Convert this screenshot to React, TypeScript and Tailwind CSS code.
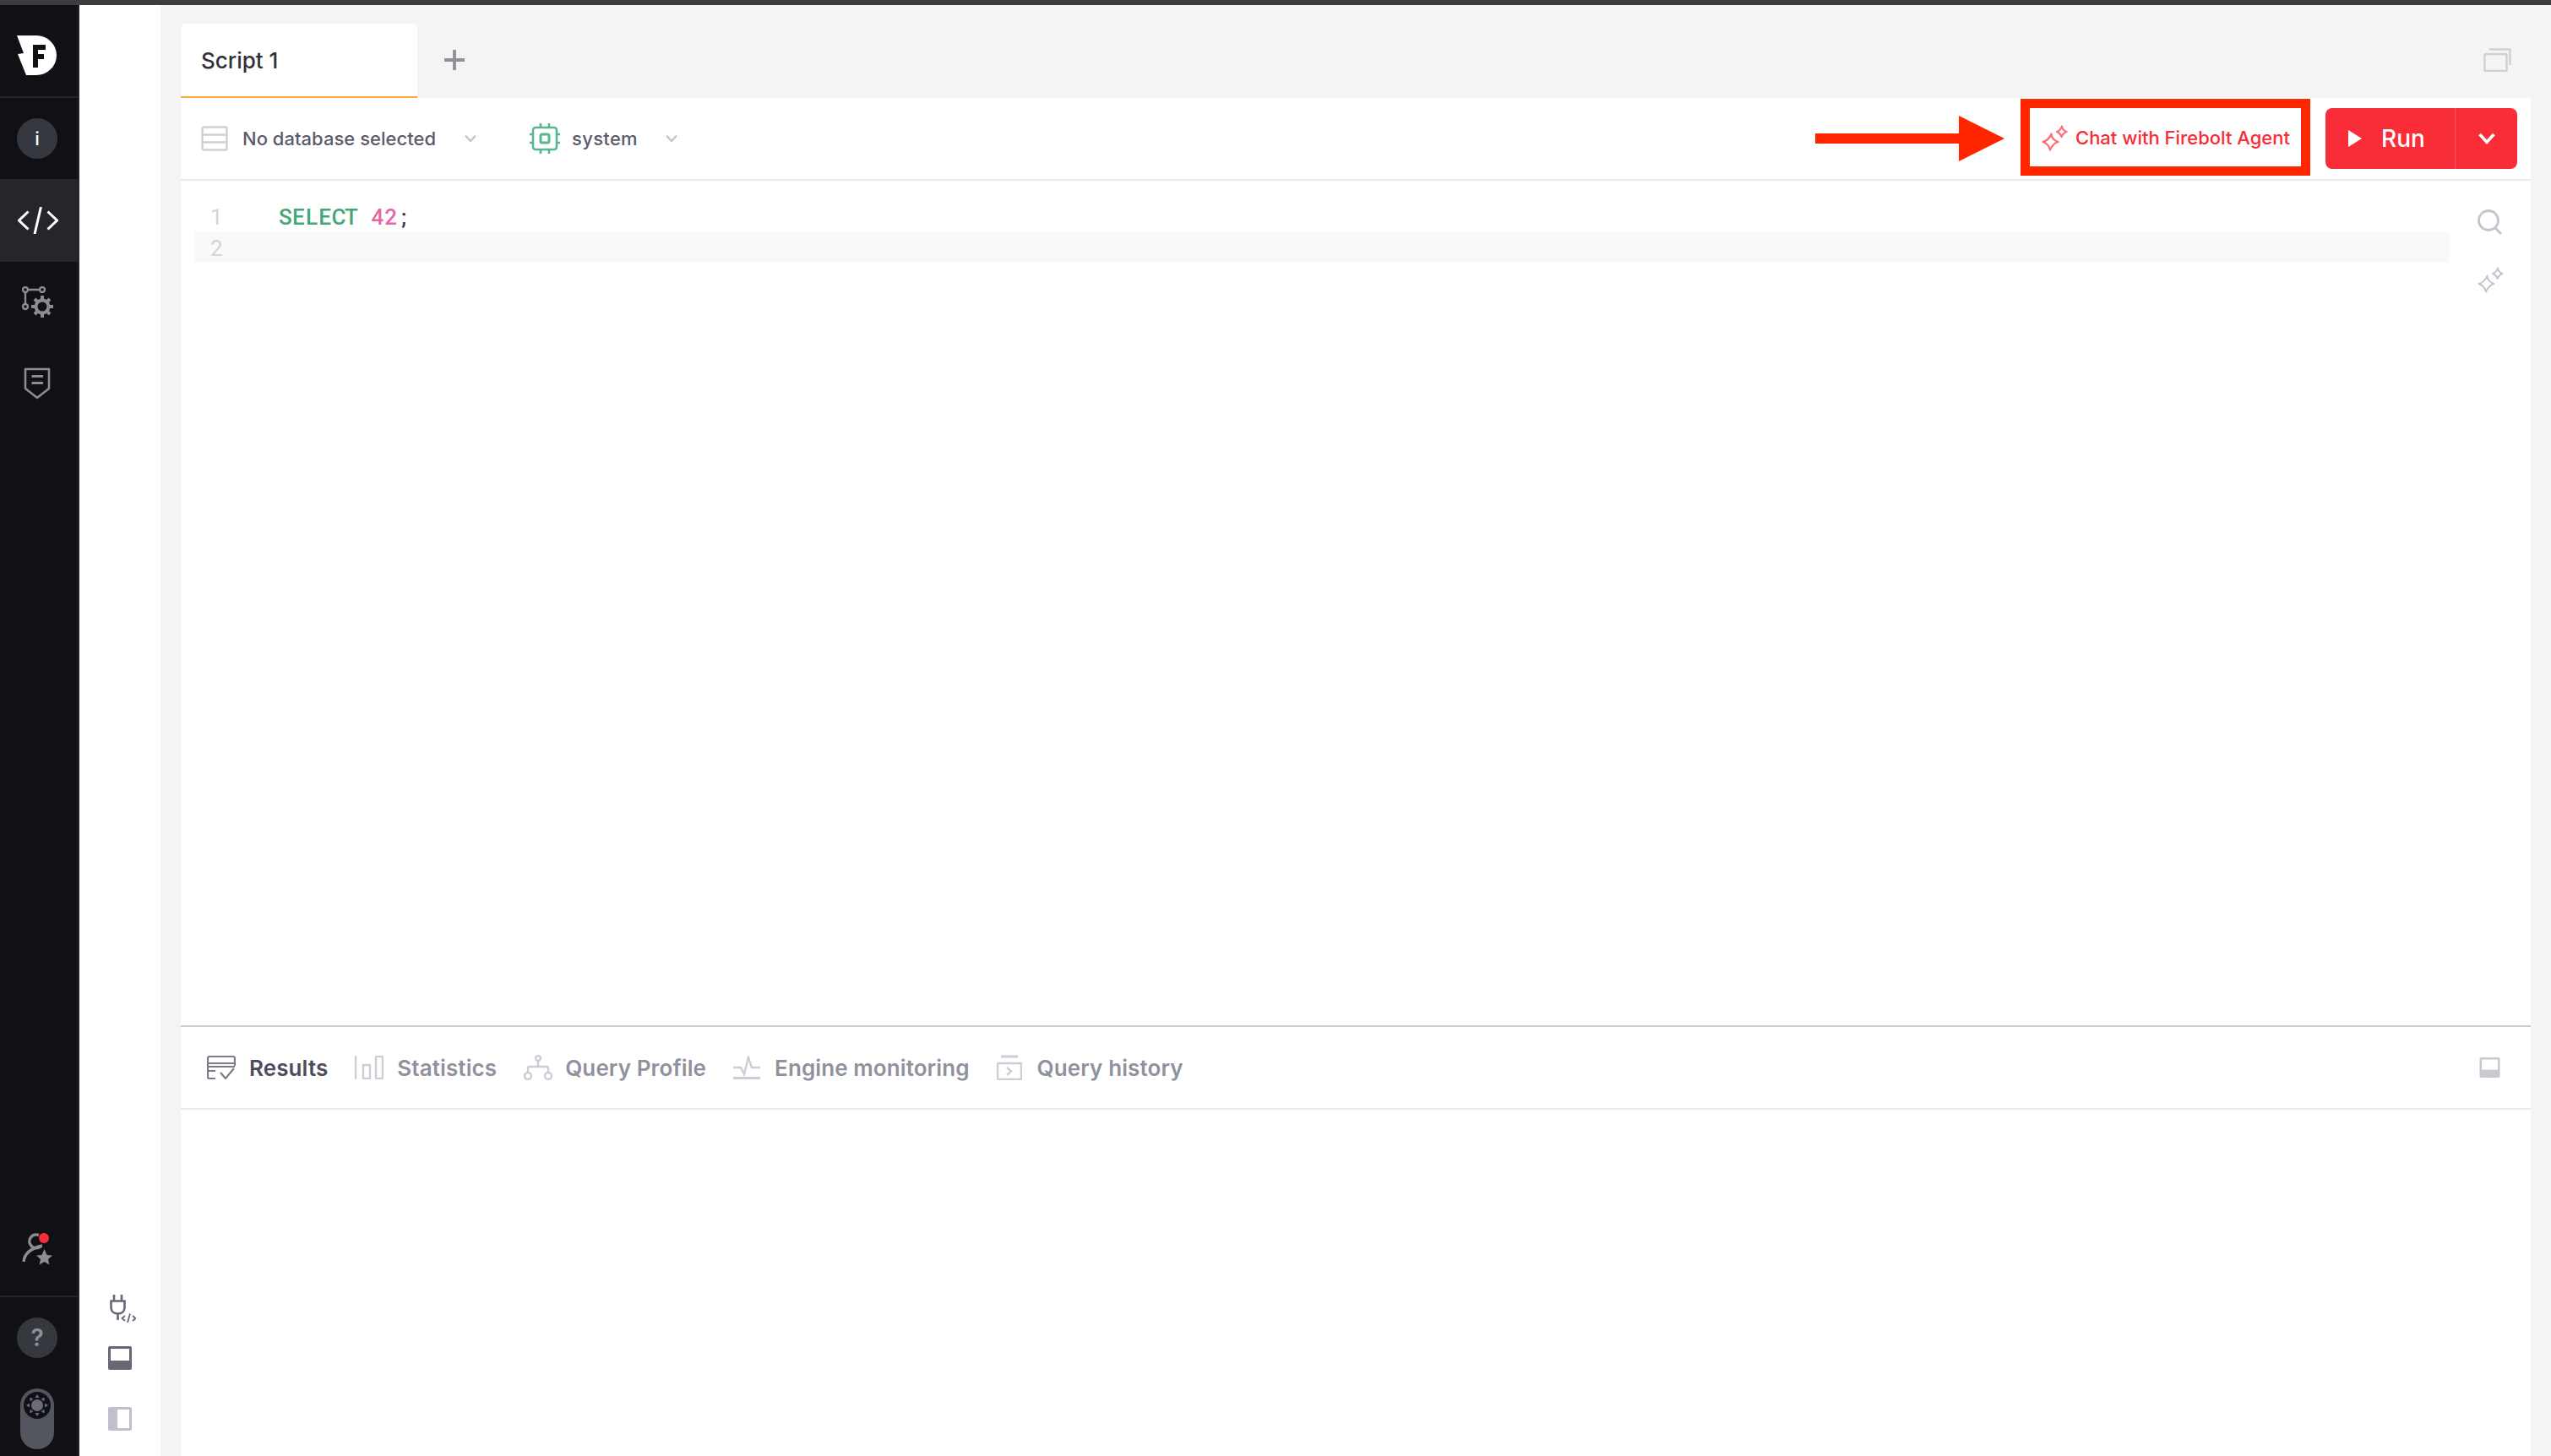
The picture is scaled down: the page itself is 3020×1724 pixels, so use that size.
import React from "react";

const F = "[font-family:Inter,'Liberation_Sans',sans-serif]";

function Sparkles({ color, className, sw = 2 }: { color: string; className?: string; sw?: number }) {
  return (
    <svg viewBox="0 0 31 31" className={className} fill="none" stroke={color} strokeWidth={sw} strokeLinejoin="round">
      <path d="M11.5 10.5 Q11.5 17 19.5 20 Q13.5 21.5 10 29.5 Q9 23 1.5 20 Q8.5 18 11.5 10.5Z" />
      <path d="M24 1.5 Q24.5 6 29.5 8 Q26 9 23.5 14 Q22.5 10 18 8 Q22.5 6.5 24 1.5Z" />
    </svg>
  );
}

function Chevron({ className, color = "#c6c6cf", sw = 2.5 }: { className?: string; color?: string; sw?: number }) {
  return (
    <svg viewBox="0 0 14 10" className={className} fill="none" stroke={color} strokeWidth={sw}>
      <path d="M1 1.5 L7 8 L13 1.5" />
    </svg>
  );
}

function Logo() {
  return (
    <svg viewBox="0 0 48 48" className="w-[48px] h-[48px]">
      <path d="M0 0H23A24 23.5 0 0 1 23 47H11L1 22L8 21Z" fill="#ffffff" />
      <path d="M19 11H34V17H25V22H32V28H25V38H19Z" fill="#101015" />
    </svg>
  );
}

function WorkflowGear() {
  const c = "#8b8d95";
  return (
    <svg viewBox="0 0 38 38" className="w-[38px] h-[38px]" fill="none" stroke={c} strokeWidth={2.4}>
      <circle cx="4" cy="4" r="3" />
      <circle cx="24" cy="4" r="3" />
      <circle cx="4" cy="24" r="3" />
      <path d="M7 4H21M4 7V21" />
      <circle cx="24" cy="24" r="7.5" strokeWidth={4} />
      <path
        d="M24 11V15M24 33V37M11 24H15M33 24H37M15 15L18 18M30 30L33 33M33 15L30 18M18 30L15 33"
        strokeWidth={4}
      />
    </svg>
  );
}

function ShieldDoc() {
  return (
    <svg viewBox="0 0 32 38" className="w-[32px] h-[38px]" fill="none" stroke="#8b8d95" strokeWidth={2.6} strokeLinejoin="round">
      <path d="M2 2H30V25L16 36L2 25Z" />
      <path d="M9.5 10.5H23M9.5 18.5H23" strokeWidth={3} />
    </svg>
  );
}

function PersonStar() {
  return (
    <div className="relative w-[36px] h-[38px]">
      <svg viewBox="0 0 36 38" className="w-[36px] h-[38px]" fill="none" stroke="#8b8d95" strokeWidth={3.4}>
        <path d="M20 2.5 A8 8 0 1 0 22 16" />
        <path d="M2 34 C3 24 10 18 24 15" />
        <path d="M27.5 20L30.5 27L37 27.5L32 32L33.5 38.5L27.5 35L21.5 38.5L23 32L18 27.5L24.5 27Z" fill="#8b8d95" stroke="none" transform="translate(-1 -1)" />
      </svg>
      <div className="absolute left-[20px] top-0 w-[12px] h-[12px] rounded-full bg-[#f92d38]" />
    </div>
  );
}

function Sun() {
  return (
    <svg viewBox="0 0 32 32" className="w-[32px] h-[32px]">
      <circle cx="16" cy="16" r="16" fill="#101015" />
      <circle cx="16" cy="16" r="7" fill="#6a6c78" />
      <g fill="#6a6c78">
        <path d="M16 3L18.5 7H13.5Z" />
        <path d="M16 29L18.5 25H13.5Z" />
        <path d="M3 16L7 13.5V18.5Z" />
        <path d="M29 16L25 13.5V18.5Z" />
        <path d="M7 7L11.5 8L8 11.5Z" />
        <path d="M25 7L20.5 8L24 11.5Z" />
        <path d="M7 25L11.5 24L8 20.5Z" />
        <path d="M25 25L20.5 24L24 20.5Z" />
      </g>
    </svg>
  );
}

function Plug() {
  return (
    <svg viewBox="0 0 31 36" className="ml-[2px] w-[31px] h-[36px]" fill="none" stroke="#666876" strokeWidth={2.6}>
      <path d="M5 1V8M14 1V8M1.5 8.5H17.5V16C17.5 21 14 23.5 9.5 23.5C5 23.5 1.5 21 1.5 16Z" />
      <path d="M9.5 23.5V31" />
      <path d="M18 26L14.5 29L18 32M27 26L30.5 29L27 32M24 23.5L21 34" strokeWidth={1.8} />
    </svg>
  );
}

function PanelBottom({ className, fill, bg }: { className: string; fill: string; bg?: string }) {
  return (
    <svg viewBox="0 0 28 28" className={className}>
      <rect x="0" y="0" width="28" height="28" rx="2" fill={fill} />
      <rect x="3" y="3" width="22" height="14" fill={bg ?? "#ffffff"} />
    </svg>
  );
}

function PanelLeft() {
  return (
    <svg viewBox="0 0 28 28" className="w-[28px] h-[28px]">
      <rect x="0" y="0" width="28" height="28" rx="2" fill="#c0c0cc" />
      <rect x="11" y="3" width="14" height="22" fill="#ffffff" />
    </svg>
  );
}

function ResultsIcon() {
  return (
    <svg viewBox="0 0 34 28" className="w-[34px] h-[28px]" fill="none" stroke="#7b7d88" strokeWidth={2.2}>
      <path d="M1 27V3A2 2 0 0 1 3 1H31A2 2 0 0 1 33 3V12" />
      <path d="M1 9H33M1 13H33M1 18H10M1 27H10" />
      <path d="M16 20L22 27L32 15" />
    </svg>
  );
}

function StatsIcon() {
  return (
    <svg viewBox="0 0 34 28" className="w-[34px] h-[28px]" fill="none" stroke="#cdcdd5" strokeWidth={2.4}>
      <path d="M1 0V28" />
      <rect x="10" y="11" width="8" height="16" />
      <rect x="25" y="1" width="8" height="26" rx="1" />
    </svg>
  );
}

function ProfileIcon() {
  return (
    <svg viewBox="0 0 34 30" className="w-[34px] h-[30px]" fill="none" stroke="#cdcdd5" strokeWidth={2.4}>
      <circle cx="17" cy="4" r="3" />
      <circle cx="5" cy="25" r="4" />
      <circle cx="29" cy="25" r="4" />
      <path d="M17 7V14M5 21V16A2 2 0 0 1 7 14H27A2 2 0 0 1 29 16V21" />
    </svg>
  );
}

function EngineIcon() {
  return (
    <svg viewBox="0 0 32 28" className="w-[32px] h-[28px]" fill="none" stroke="#cdcdd5" strokeWidth={2.4}>
      <path d="M0 14H9L13 22L18 2L22 14H32" />
      <path d="M0 26.5H32" strokeWidth={3} />
    </svg>
  );
}

function HistoryIcon() {
  return (
    <svg viewBox="0 0 30 30" className="w-[30px] h-[30px]" fill="none" stroke="#cdcdd5" strokeWidth={2.4}>
      <path d="M5 2H25" strokeWidth={3} />
      <rect x="1" y="10" width="28" height="19" rx="1" />
      <path d="M12 15L17 19.5L12 24" />
    </svg>
  );
}

const tabs = [
  { label: "Results", icon: <ResultsIcon />, active: true, gap: "gap-[16px]" },
  { label: "Statistics", icon: <StatsIcon />, active: false, gap: "gap-[16px]" },
  { label: "Query Profile", icon: <ProfileIcon />, active: false, gap: "gap-[15px]" },
  { label: "Engine monitoring", icon: <EngineIcon />, active: false, gap: "gap-[17px]" },
  { label: "Query history", icon: <HistoryIcon />, active: false, gap: "gap-[18px]" },
];

function Mono({ text, className }: { text: string; className: string }) {
  return (
    <span className={`inline-flex ${className}`}>
      {text.split("").map((ch, i) => (
        <span key={i} className="inline-block w-[15.6px] text-center">
          {ch}
        </span>
      ))}
    </span>
  );
}

export default function App() {
  return (
    <div className={`w-[3020px] h-[1724px] flex flex-col overflow-hidden bg-white ${F}`}>
      <div className="h-[6px] shrink-0 bg-[#3d3d3f]" />
      <div className="flex-1 flex min-h-0">
        {/* Dark rail */}
        <div className="w-[94px] shrink-0 flex flex-col bg-[#101015] border-r-2 border-r-[#202125]">
          <div className="h-[110px] shrink-0 border-b-2 border-b-[#26272b] pl-[20px] pt-[36px]">
            <Logo />
          </div>
          <div className="h-[96px] shrink-0 flex items-center justify-center pr-[4px]">
            <div className="w-[48px] h-[48px] rounded-full bg-[#36383f] flex items-center justify-center text-white text-[22px] font-medium">
              i
            </div>
          </div>
          <div className="h-[98px] shrink-0 flex items-center justify-center bg-[#25262a] pr-[4px] mr-[-2px]">
            <svg viewBox="0 0 48 32" className="w-[48px] h-[32px]" fill="none" stroke="#ffffff" strokeWidth={3}>
              <path d="M12.5 5.5L1.5 16L12.5 26.5M35.5 5.5L46.5 16L35.5 26.5M27.5 0L20 32" />
            </svg>
          </div>
          <div className="h-[96px] shrink-0 flex items-center justify-center pr-[2px]">
            <WorkflowGear />
          </div>
          <div className="h-[96px] shrink-0 flex items-center justify-center pr-[4px]">
            <ShieldDoc />
          </div>
          <div className="mt-auto h-[74px] shrink-0 flex items-start justify-center pr-[4px]">
            <PersonStar />
          </div>
          <div className="h-[2px] shrink-0 bg-[#26272b]" />
          <div className="h-[188px] shrink-0 flex flex-col items-center pt-[24px] pr-[4px]">
            <div className="w-[48px] h-[48px] rounded-full bg-[#36383f] flex items-center justify-center text-[#8e9097] text-[28px] font-semibold">
              ?
            </div>
            <div className="mt-[36px] w-[40px] h-[72px] rounded-full bg-[#53555f] flex justify-center pt-[4px]">
              <Sun />
            </div>
          </div>
        </div>

        {/* Secondary panel */}
        <div className="w-[96px] shrink-0 flex flex-col items-start pl-[34px] justify-end pb-[30px] bg-white">
          <Plug />
          <div className="mt-[26px]">
            <PanelBottom className="w-[28px] h-[28px]" fill="#666876" />
          </div>
          <div className="mt-[44px]">
            <PanelLeft />
          </div>
        </div>

        {/* Workspace */}
        <div className="flex-1 min-w-0 flex flex-col bg-[#f5f3f4] pl-[24px] pr-[24px]">
          {/* Tab strip */}
          <div className="h-[110px] shrink-0 flex items-stretch pt-[22px]">
            <div className="w-[280px] bg-white rounded-t-md border-b-2 border-b-[#ffa436] flex items-center pl-[24px] text-[26px] text-[#30323a] font-medium">
              Script 1
            </div>
            <div className="flex items-center ml-[32px] mb-[2px]">
              <svg viewBox="0 0 24 24" className="w-[24px] h-[24px]" fill="none" stroke="#8e9199" strokeWidth={3.8}>
                <path d="M12 0V24M0 12H24" />
              </svg>
            </div>
            <div className="ml-auto mr-[23px] mt-[29px]">
              <svg viewBox="0 0 33 28" className="w-[33px] h-[28px]" fill="none" stroke="#cfcfd6" strokeWidth={2.4}>
                <rect x="1.5" y="7" width="26" height="20" rx="1" />
                <path d="M7 1.5H31.5V20" />
              </svg>
            </div>
          </div>

          {/* White panel */}
          <div className="flex-1 min-h-0 flex flex-col bg-white">
            {/* Toolbar */}
            <div className="h-[98px] shrink-0 flex items-center border-b-2 border-b-[#ebebed] pl-[24px] pr-[16px]">
              <svg viewBox="0 0 32 30" className="w-[32px] h-[30px]" fill="none" stroke="#cfcfd6" strokeWidth={2.4}>
                <rect x="1.5" y="1.5" width="29" height="27" rx="2" />
                <path d="M1.5 10.5H30.5M1.5 19.5H30.5" />
              </svg>
              <span className="ml-[17px] text-[22px] font-medium text-[#5a5c6b] tracking-[0.02px]">No database selected</span>
              <Chevron className="ml-[34px] w-[14px] h-[10px]" />
              <svg viewBox="0 0 36 36" className="ml-[63px] w-[36px] h-[36px]" fill="none" stroke="#57b88f" strokeWidth={2.6}>
                <rect x="4" y="5" width="28" height="26" rx="3" />
                <rect x="13" y="13" width="10" height="10" rx="2" strokeWidth={3} />
                <path d="M13 0V5M23 0V5M13 31V36M23 31V36M0 13H4M0 23H4M32 13H36M32 23H36" />
              </svg>
              <span className="ml-[14px] text-[22px] font-medium text-[#5a5c6b] tracking-[0.3px]">system</span>
              <Chevron className="ml-[33px] w-[14px] h-[10px]" />
              <svg viewBox="0 0 224 54" className="ml-auto w-[224px] h-[54px]" fill="#ff2600">
                <path d="M0 21H170V0L224 27L170 54V33H0Z" />
              </svg>
              <div className="ml-[19px] mb-[3px] w-[343px] h-[91px] border-[11px] border-[#ff2600] flex items-center pl-[14px] pt-[2px]">
                <Sparkles color="#fb6d74" sw={2.2} className="w-[31px] h-[31px]" />
                <span className="ml-[9px] text-[22px] font-medium text-[#f92b37] whitespace-nowrap">Chat with Firebolt Agent</span>
              </div>
              <div className="ml-[18px] w-[227px] h-[72px] flex rounded-lg bg-[#f92d38] text-white">
                <div className="w-[154px] flex items-center pl-[27px] border-r border-r-[#fb5a63]">
                  <svg viewBox="0 0 16 20" className="w-[16px] h-[20px]" fill="#ffffff">
                    <path d="M0 0L16 10L0 20Z" />
                  </svg>
                  <span className="ml-[23px] text-[28px] font-medium">Run</span>
                </div>
                <div className="flex-1 flex items-center justify-center">
                  <Chevron className="w-[20px] h-[14px]" color="#ffffff" sw={2.6} />
                </div>
              </div>
            </div>

            {/* Editor */}
            <div className="h-[1000px] shrink-0 flex pl-[16px] pt-[23px]">
              <div className="flex-1 min-w-0 flex flex-col text-[26px] leading-[37px] [font-family:Roboto,sans-serif]">
                <div className="h-[37px] pt-[2px] flex">
                  <span className="w-[100px] pl-[19px] text-[#d3d3da]">1</span>
                  <Mono text="SELECT" className="text-[#45a679] font-medium" />
                  <Mono text=" " className="" />
                  <Mono text="42" className="text-[#e667a8] font-medium" />
                  <Mono text=";" className="text-[#3a3c44] font-medium" />
                </div>
                <div className="h-[37px] pt-[2px] flex bg-[#f9f9f9]">
                  <span className="w-[100px] pl-[19px] text-[#d3d3da]">2</span>
                </div>
              </div>
              <div className="w-[96px] shrink-0 flex flex-col items-center pt-[11px]">
                <svg viewBox="0 0 30 30" className="w-[30px] h-[30px]" fill="none" stroke="#c4c4ce" strokeWidth={2.8}>
                  <circle cx="13" cy="13" r="11.5" />
                  <path d="M21 22L28 29" />
                </svg>
                <Sparkles color="#c4c4ce" className="mt-[38px] w-[31px] h-[31px]" />
              </div>
            </div>

            {/* Results */}
            <div className="flex-1 min-h-0 flex flex-col border-t-2 border-t-[#cacad1]">
              <div className="h-[98px] shrink-0 flex items-center border-b-2 border-b-[#ebebed] pl-[31px] pr-[36px]">
                <div className="flex items-center gap-[32px]">
                  {tabs.map((t) => (
                    <div key={t.label} className={`flex items-center ${t.gap}`}>
                      {t.icon}
                      <span className={`text-[26px] font-semibold tracking-[0.1px] ${t.active ? "text-[#4b4d5c]" : "text-[#8f919c]"}`}>{t.label}</span>
                    </div>
                  ))}
                </div>
                <div className="ml-auto">
                  <PanelBottom className="w-[25px] h-[24px]" fill="#c9c9d2" />
                </div>
              </div>
              <div className="flex-1" />
            </div>
          </div>
        </div>
      </div>
    </div>
  );
}
